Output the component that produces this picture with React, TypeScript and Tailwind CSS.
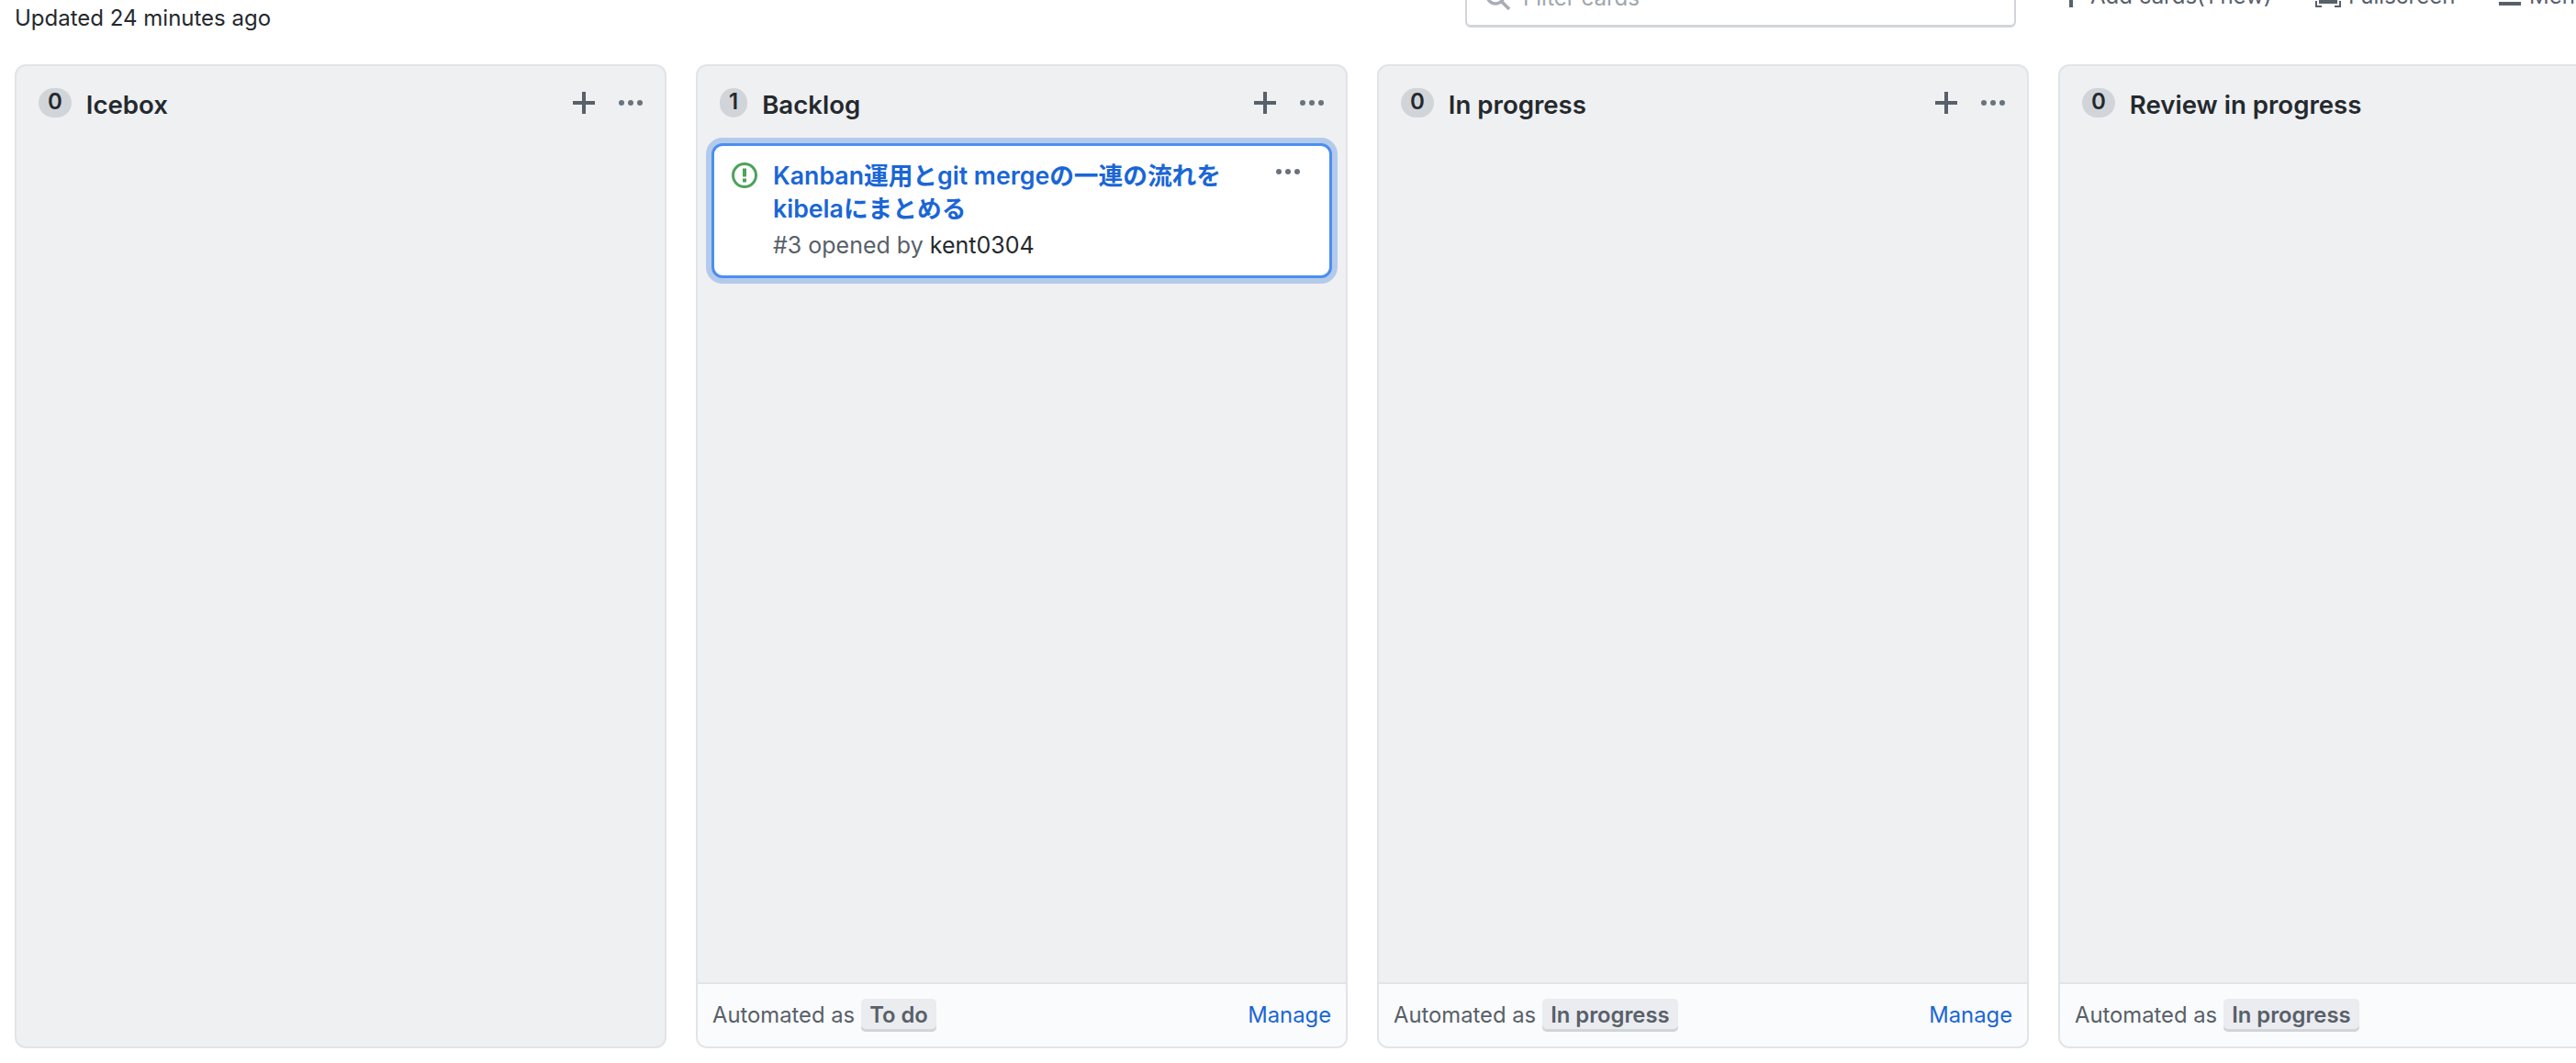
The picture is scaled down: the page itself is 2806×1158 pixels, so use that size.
const fontStack = { fontFamily: 'Inter, "Noto Sans CJK JP", sans-serif' };

function PlusIcon({ className }: { className?: string }) {
  return (
    <svg className={className} width="24" height="24" viewBox="0 0 12 12" fill="currentColor">
      <path d="M5 0h2v5h5v2H7v5H5V7H0V5h5z" />
    </svg>
  );
}

function KebabIcon({ className }: { className?: string }) {
  return (
    <svg className={className} width="26" height="6" viewBox="0 0 26 6" fill="currentColor">
      <circle cx="3" cy="3" r="3" />
      <circle cx="13" cy="3" r="3" />
      <circle cx="23" cy="3" r="3" />
    </svg>
  );
}

function IssueIcon() {
  return (
    <svg className="shrink-0 mt-[4px]" width="28" height="28" viewBox="0 0 28 28" fill="#4ea25b">
      <circle cx="14" cy="14" r="12.5" fill="none" stroke="#4ea25b" strokeWidth="3" />
      <rect x="12" y="6.5" width="4" height="9" />
      <rect x="12" y="17.5" width="4" height="4" />
    </svg>
  );
}

function Column({ count, title, automation, children }: { count: number; title: string; automation?: string; children?: React.ReactNode }) {
  return (
    <div className="w-[710px] h-[1072px] shrink-0 flex flex-col bg-[#eff0f2] border-2 border-[#e1e4e8] rounded-[12px] overflow-hidden">
      <div className="flex items-start pl-[24px] pr-[24px] pt-[24px] h-[78px] shrink-0">
        <span className="h-[32px] px-[10px] rounded-full bg-[#d1d5da] text-[24px] leading-[30px] font-semibold text-center text-[#24292e]">{count}</span>
        <h3 className="ml-[16px] text-[27.6px] leading-[36px] font-semibold text-[#24292e]">{title}</h3>
        <PlusIcon className="ml-auto mt-[4px] text-[#586069]" />
        <KebabIcon className="ml-[26px] mt-[13px] text-[#6a737d]" />
      </div>
      <div className="flex-1 px-[15px]">{children}</div>
      {automation && (
        <div className="h-[70px] shrink-0 flex items-center px-[16px] bg-[#fafbfc] border-t-2 border-[#e1e4e8] text-[23.8px] text-[#586069]">
          <span>Automated as</span>
          <span className="ml-[7px] h-[36px] px-[9px] flex items-center rounded-[5px] bg-[#ebecf0] shadow-[inset_0_-3px_0_#d1d5da] font-semibold">{automation}</span>
          <a className="ml-auto text-[#1a66d6]">Manage</a>
        </div>
      )}
    </div>
  );
}

export default function App() {
  return (
    <div className="w-[2806px] h-[1158px] overflow-hidden bg-white" style={fontStack}>
      <div className="h-[70px] overflow-hidden flex items-start pl-[16px] text-[24px]">
        <p className="mt-[2px] leading-[36px] text-[#24292e]">Updated 24 minutes ago</p>
        <div className="ml-auto flex items-start shrink-0 w-[1210px] text-[#586069]">
          <div className="w-[600px] shrink-0 h-[64px] -mt-[34px] flex items-center pl-[20px] border-2 border-[#d1d5da] rounded-[6px] shadow-[inset_0_-1px_0_#d1d5da] text-[#a0a6ad]">
            <svg width="28" height="28" viewBox="0 0 28 28" fill="none" stroke="#a9aeb5" strokeWidth="3.5">
              <circle cx="11" cy="11" r="9" />
              <path d="M18 18l8 8" />
            </svg>
            <span className="ml-[13px]">Filter cards</span>
          </div>
          <div className="ml-[48px] shrink-0 flex items-center h-[36px] -mt-[22px] w-[278px]">
            <PlusIcon />
            <span className="ml-[9px]">Add cards(1 new)</span>
          </div>
          <div className="shrink-0 flex items-center h-[36px] -mt-[22px] w-[200px]">
            <svg width="28" height="24" viewBox="0 0 28 24" fill="none" stroke="currentColor" strokeWidth="2">
              <path d="M1 7V1h6M21 1h6v6M27 17v6h-6M7 23H1v-6" />
              <rect x="5" y="5" width="18" height="14" fill="currentColor" />
            </svg>
            <span className="ml-[8px]">Fullscreen</span>
          </div>
          <div className="shrink-0 flex items-center h-[36px] -mt-[22px]">
            <svg width="24" height="24" viewBox="0 0 24 24" fill="currentColor">
              <rect y="2" width="24" height="4" />
              <rect y="10" width="24" height="4" />
              <rect y="18" width="24" height="4" />
            </svg>
            <span className="ml-[9px]">Menu</span>
          </div>
        </div>
      </div>

      <div className="flex gap-[32px] pl-[16px]">
        <Column count={0} title="Icebox" />
        <Column count={1} title="Backlog" automation="To do">
          <div className="flex items-start h-[147px] mt-[6px] pl-[19px] pr-[32px] pt-[14px] bg-white border-[3px] border-[#4a8ff0] rounded-[12px] shadow-[0_0_0_6px_#b4caea]">
            <IssueIcon />
            <div className="ml-[17px] flex-1">
              <p className="text-[26.7px] leading-[36px] font-semibold text-[#1a66d6]">Kanban運用とgit mergeの一連の流れを<br />kibelaにまとめる</p>
              <p className="mt-[5px] text-[25px] leading-[34px] text-[#586069]">#3 opened by <span className="text-[#24292e]">kent0304</span></p>
            </div>
            <KebabIcon className="mt-[11px] text-[#6a737d]" />
          </div>
        </Column>
        <Column count={0} title="In progress" automation="In progress" />
        <Column count={0} title="Review in progress" automation="In progress" />
      </div>
    </div>
  );
}
